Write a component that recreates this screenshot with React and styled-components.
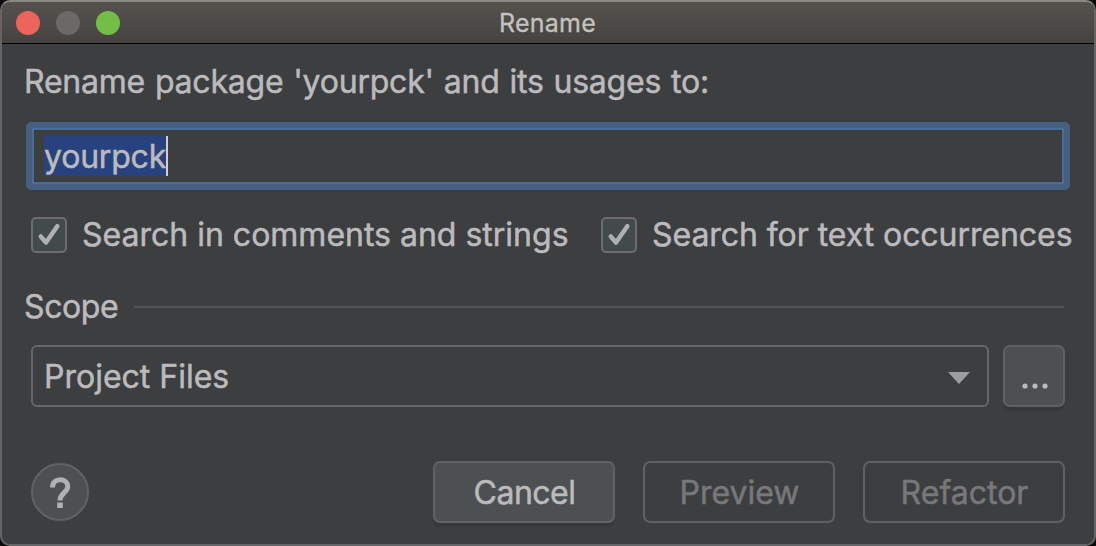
import React from "react";
import styled, { createGlobalStyle } from "styled-components";

const Global = createGlobalStyle`
  * { box-sizing: border-box; }
  body { margin: 0; background: #0b0b0c; }
`;

const Dialog = styled.div`
  width: 1096px;
  height: 546px;
  display: flex;
  flex-direction: column;
  overflow: hidden;
  border: 2px solid #646567;
  border-top-color: #8a8885;
  border-radius: 10px;
  background: #3d3e40;
  color: #bbbbbd;
  font-family: Inter, "Liberation Sans", sans-serif;
  font-size: 32px;
  line-height: 40px;
  white-space: nowrap;
  -webkit-text-stroke: 0.5px currentColor;
`;

const TitleBar = styled.div`
  flex: none;
  height: 42px;
  display: grid;
  grid-template-columns: 1fr auto 1fr;
  align-items: center;
  padding: 0 15px 0 14px;
  background: linear-gradient(#55524e, #454340);
  border-bottom: 1px solid #000;
`;

const Lights = styled.div`
  display: flex;
  gap: 16px;
`;

const Light = styled.span`
  width: 24px;
  height: 24px;
  border-radius: 50%;
  background: ${(p) => p.$color};
`;

const Title = styled.div`
  font-size: 25px;
  line-height: 30px;
  letter-spacing: 0.25px;
  color: #c4c2bf;
  -webkit-text-stroke: 0.3px currentColor;
`;

const Content = styled.div`
  flex: 1;
  display: flex;
  flex-direction: column;
  padding: 18px 22px 0 22px;
`;

const Text = styled.span`
  letter-spacing: ${(p) => p.$spacing || 0}px;
  word-spacing: ${(p) => p.$words || 0}px;
`;

const Field = styled.div`
  margin: 20px 2px 0;
  height: 68px;
  display: flex;
  align-items: center;
  padding-left: 10px;
  border: 6px solid #456081;
  border-radius: 5px;
  box-shadow: inset 0 0 0 2px #4a6e95;
`;

const Selected = styled.span`
  height: 40px;
  line-height: 42px;
  background: #28427f;
  border-right: 2px solid #d0d0d0;
  margin-left: 2px;
  letter-spacing: -0.2px;
`;

const Checks = styled.div`
  display: flex;
  margin: 25px 0 0 7px;
`;

const CheckItem = styled.label`
  flex: none;
  width: 570px;
  display: flex;
  align-items: center;
  gap: 15px;
`;

const CheckBox = styled.span`
  flex: none;
  width: 36px;
  height: 36px;
  border: 2px solid #6b6d6e;
  border-radius: 5px;
  background: #434a4b;
`;

const ScopeRow = styled.div`
  display: flex;
  align-items: center;
  gap: 16px;
  margin: 32px 8px 0 0;
`;

const Rule = styled.span`
  flex: 1;
  height: 2px;
  background: #515355;
`;

const Row = styled.div`
  display: flex;
  gap: 14px;
  margin: 18px 7px 0;
`;

const Combo = styled.div`
  flex: 1;
  height: 62px;
  display: flex;
  align-items: center;
  justify-content: space-between;
  padding: 2px 17px 0 11px;
  border: 2px solid #646668;
  border-radius: 6px;
`;

const Button = styled.div`
  width: ${(p) => p.$width}px;
  height: 62px;
  display: flex;
  align-items: center;
  justify-content: center;
  padding: 2px 0 0 1px;
  border: 2px solid #5f6163;
  border-radius: 7px;
  color: ${(p) => (p.$disabled ? "#77787a" : "#bbbbbd")};
  background: ${(p) => (p.$disabled ? "transparent" : "#4c5052")};
  box-shadow: ${(p) => (p.$disabled ? "none" : "0 5px 1px -1px #37383a")};
`;

const Footer = styled.div`
  display: flex;
  align-items: center;
  gap: 28px;
  margin: 54px 7px 0;
`;

const Help = styled.div`
  width: 58px;
  height: 58px;
  margin-right: auto;
  border: 2px solid #5f6264;
  border-radius: 50%;
  background: #4c5052;
`;

function Check({ label, spacing }) {
  return (
    <CheckItem>
      <CheckBox>
        <svg width="32" height="32" viewBox="0 0 32 32" fill="none" style={{ display: "block" }}>
          <path d="M7.800 17.500 13 23.500 24.300 7.200" stroke="#aeb0b1" strokeWidth="4.500" strokeLinecap="round" strokeLinejoin="round" />
        </svg>
      </CheckBox>
      <Text $spacing={spacing}>{label}</Text>
    </CheckItem>
  );
}

export default function App() {
  return (
    <>
      <Global />
      <Dialog>
        <TitleBar>
          <Lights>
            <Light $color="#ed655a" />
            <Light $color="#6b6967" />
            <Light $color="#72be47" />
          </Lights>
          <Title>Rename</Title>
        </TitleBar>
        <Content>
          <Text $spacing={-0.22} $words={1.1}>Rename package 'yourpck' and its usages to:</Text>
          <Field>
            <Selected>yourpck</Selected>
          </Field>
          <Checks>
            <Check label="Search in comments and strings" />
            <Check label="Search for text occurrences" spacing={-0.06} />
          </Checks>
          <ScopeRow>
            <Text $spacing={-0.4}>Scope</Text>
            <Rule />
          </ScopeRow>
          <Row>
            <Combo>
              <Text>Project Files</Text>
              <svg width="22" height="12" viewBox="0 0 22 12" style={{ marginTop: 2 }}>
                <path d="M0 0h22L11 12z" fill="#9b9da0" />
              </svg>
            </Combo>
            <Button $width={62}>
              <svg width="26" height="6" viewBox="0 0 26 6" fill="#bbbbbd" style={{ marginTop: 18 }}>
                <circle cx="3" cy="3" r="2.6" />
                <circle cx="13" cy="3" r="2.6" />
                <circle cx="23" cy="3" r="2.6" />
              </svg>
            </Button>
          </Row>
          <Footer>
            <Help>
              <svg width="54" height="54" viewBox="0 0 54 54" fill="none" style={{ display: "block" }}>
                <path d="M19.5 22.5c0-5 3.2-7.8 7.6-7.8s7.6 2.700 7.600 6.700c0 6-7.700 6.600-7.700 14.100" stroke="#afb1b3" strokeWidth="5" />
                <path d="M24.200 37.500h5.600v5.500h-5.600z" fill="#afb1b3" />
              </svg>
            </Help>
            <Button $width={182}><Text $spacing={-0.5}>Cancel</Text></Button>
            <Button $width={192} $disabled><Text>Preview</Text></Button>
            <Button $width={202} $disabled><Text>Refactor</Text></Button>
          </Footer>
        </Content>
      </Dialog>
    </>
  );
}
